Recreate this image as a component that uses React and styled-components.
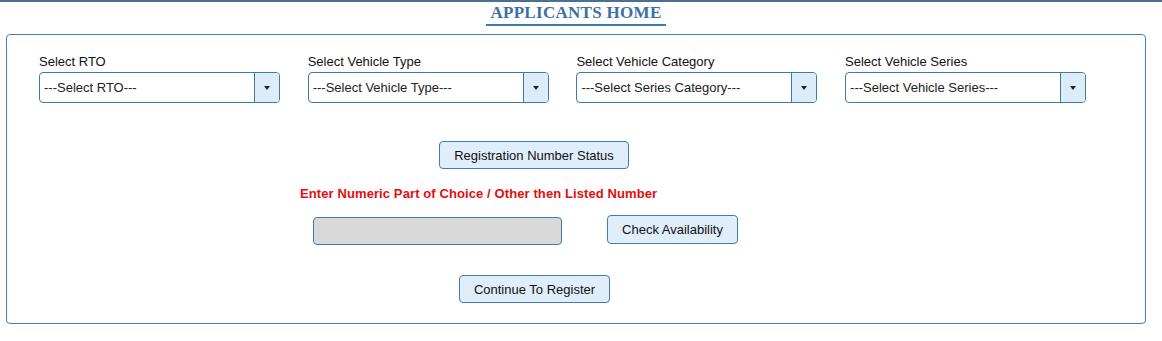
import styled, { createGlobalStyle } from 'styled-components'

const GlobalStyle = createGlobalStyle`
    body {
        margin: 0;
        background: #fff;
        font-family: "Liberation Sans", Arial, sans-serif;
        font-size: 13px;
        color: #111;
    }
`

const Page = styled.div`
    border-top: 2px solid #4a7094;
    display: flex;
    flex-direction: column;
    align-items: flex-start;
`

const TitleWrap = styled.div`
    align-self: stretch;
    display: flex;
    justify-content: center;
    padding: 2px 10px 8px 0;
`

const Title = styled.h2`
    margin: 0;
    padding: 0 4px 2px 4px;
    font-family: "Liberation Serif", "Times New Roman", serif;
    font-size: 17px;
    font-weight: bold;
    letter-spacing: 0.3px;
    line-height: 18px;
    color: #3b70a3;
    border-bottom: 2px solid #3f7bab;
`

const Panel = styled.div`
    box-sizing: border-box;
    width: 1140px;
    height: 290px;
    margin-left: 6px;
    border: 1px solid #3a84b6;
    border-radius: 4px;
    padding: 19px 0 0;
    display: flex;
    flex-direction: column;
`

const Fields = styled.div`
    display: grid;
    grid-template-columns: repeat(4, 241px);
    column-gap: 27.7px;
    padding-left: 32px;
`

const Field = styled.div`
    display: flex;
    flex-direction: column;
`

const Label = styled.label`
    line-height: 15px;
    margin-bottom: 3px;
    color: #111;
`

const Select = styled.div`
    box-sizing: border-box;
    height: 31px;
    display: flex;
    border: 1px solid #3a7ca5;
    border-radius: 4px;
    overflow: hidden;
`

const SelectText = styled.span`
    flex: 1;
    display: flex;
    align-items: center;
    padding-left: 4px;
    color: #222;
`

const Arrow = styled.span`
    width: 24px;
    border-left: 1px solid #3a7ca5;
    background: #ddecf9;
    display: flex;
    align-items: center;
    justify-content: center;

    &::after {
        content: '';
        border-left: 3.5px solid transparent;
        border-right: 3.5px solid transparent;
        border-top: 4px solid #222;
        margin-top: 1px;
    }
`

const Row = styled.div`
    display: flex;
    align-items: flex-start;
    padding-left: ${(p) => p.$offset}px;
    margin-top: ${(p) => p.$top}px;
    gap: ${(p) => p.$gap || 0}px;
`

const Button = styled.button`
    box-sizing: border-box;
    height: ${(p) => p.$h || 28}px;
    width: ${(p) => p.$w}px;
    padding: 0;
    font-family: "Liberation Sans", Arial, sans-serif;
    font-size: 13px;
    color: #111;
    background: #dfeefa;
    border: 1px solid #3c7fae;
    border-radius: 4px;
`

const Notice = styled.p`
    margin: 0;
    font-weight: bold;
    letter-spacing: 0.1px;
    line-height: 15px;
    color: #e30d0d;
`

const NumberInput = styled.input`
    box-sizing: border-box;
    width: 249px;
    height: 28px;
    margin-top: 2px;
    background: #d9d9d9;
    border: 1px solid #3a7ca5;
    border-radius: 4px;
`

const fields = [
    ['Select RTO', '---Select RTO---'],
    ['Select Vehicle Type', '---Select Vehicle Type---'],
    ['Select Vehicle Category', '---Select Series Category---'],
    ['Select Vehicle Series', '---Select Vehicle Series---'],
]

export default function App() {
    return (
        <>
            <GlobalStyle />
            <Page>
                <TitleWrap>
                    <Title>APPLICANTS HOME</Title>
                </TitleWrap>
                <Panel>
                    <Fields>
                        {fields.map(([label, placeholder]) => (
                            <Field key={label}>
                                <Label>{label}</Label>
                                <Select>
                                    <SelectText>{placeholder}</SelectText>
                                    <Arrow />
                                </Select>
                            </Field>
                        ))}
                    </Fields>
                    <Row $offset={432} $top={38}>
                        <Button $w={190}>Registration Number Status</Button>
                    </Row>
                    <Row $offset={293} $top={17}>
                        <Notice>Enter Numeric Part of Choice / Other then Listed Number</Notice>
                    </Row>
                    <Row $offset={306} $top={14} $gap={45}>
                        <NumberInput disabled />
                        <Button $w={131} $h={29}>Check Availability</Button>
                    </Row>
                    <Row $offset={452} $top={30}>
                        <Button $w={151}>Continue To Register</Button>
                    </Row>
                </Panel>
            </Page>
        </>
    )
}
